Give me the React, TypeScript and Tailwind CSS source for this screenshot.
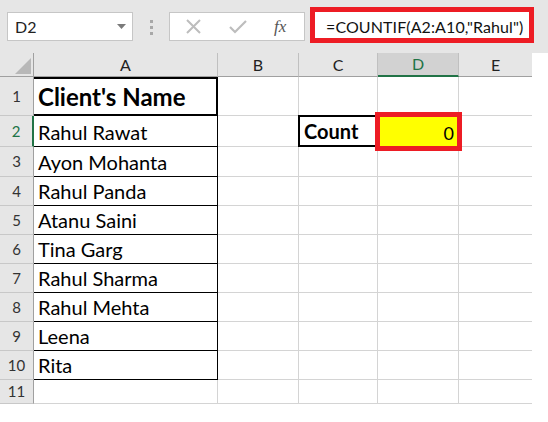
import React from "react";

const font = { fontFamily: "Lato, 'Open Sans', sans-serif" };

const names = [
  "Rahul Rawat",
  "Ayon Mohanta",
  "Rahul Panda",
  "Atanu Saini",
  "Tina Garg",
  "Rahul Sharma",
  "Rahul Mehta",
  "Leena",
  "Rita",
];

const rowHeights = [39, 31, 30, 29, 29, 29, 29, 29, 29, 29, 24];

function RowHeader({ n, h, active }: { n: number; h: number; active?: boolean }) {
  return (
    <div
      className={`flex items-center justify-center bg-[#e6e6e6] border-b border-[#c8c8c8] text-[15px] ${
        active ? "text-[#217346] border-r-2 border-r-[#217346]" : "text-[#333] border-r border-r-[#a0a0a0]"
      }`}
      style={{ height: h }}
    >
      {n}
    </div>
  );
}

export default function App() {
  return (
    <div className="w-[548px] h-[422px] bg-white overflow-hidden relative" style={font}>
      {/* toolbar */}
      <div className="h-[53px] bg-[#e6e6e6] relative flex items-start">
        <div className="mt-[12px] ml-[7px] w-[126px] h-[29px] bg-white border border-[#c6c6c6] flex items-center pl-[7px] pr-[6px] justify-between">
          <span className="text-[16px] text-[#222]">D2</span>
          <svg width="9" height="5" viewBox="0 0 9 5">
            <polygon points="0,0 9,0 4.5,5" fill="#7a7a7a" />
          </svg>
        </div>
        <div className="mt-[20px] ml-[17px] flex flex-col gap-[3px]">
          <div className="w-[3px] h-[3px] bg-[#a8a8a8]" />
          <div className="w-[3px] h-[3px] bg-[#a8a8a8]" />
          <div className="w-[3px] h-[3px] bg-[#a8a8a8]" />
        </div>
        <div className="mt-[12px] ml-[16px] w-[136px] h-[29px] bg-white border border-[#c6c6c6] flex items-center">
          <svg className="ml-[16px]" width="15" height="15" viewBox="0 0 15 15">
            <path d="M1 1 L14 14 M14 1 L1 14" stroke="#bdbdbd" strokeWidth="2" fill="none" />
          </svg>
          <svg className="ml-[28px]" width="18" height="14" viewBox="0 0 18 14">
            <path d="M1 7 L6 12 L17 1" stroke="#bdbdbd" strokeWidth="2.2" fill="none" />
          </svg>
          <span
            className="ml-[27px] text-[17px] italic text-[#555]"
            style={{ fontFamily: "'Liberation Serif', serif" }}
          >
            fx
          </span>
        </div>
        <div className="absolute left-[310px] top-[7px] w-[224px] h-[36px] border-[5px] border-[#ed1c24] bg-white flex items-center pl-[11px] pt-[3px]">
          <span className="text-[16px] text-[#111] tracking-[0.1px]">=COUNTIF(A2:A10,"Rahul")</span>
        </div>
      </div>

      {/* sheet */}
      <div className="flex">
        {/* row header column */}
        <div className="w-[34px] flex flex-col">
          <div className="h-[24px] bg-[#e6e6e6] border-r border-b border-[#a0a0a0] relative">
            <svg className="absolute left-[15px] top-[5px]" width="16" height="16" viewBox="0 0 16 16">
              <polygon points="16,0 16,16 0,16" fill="#b8b8b8" />
            </svg>
          </div>
          {rowHeights.map((h, i) => (
            <RowHeader key={i} n={i + 1} h={h} active={i === 1} />
          ))}
        </div>

        {/* column A */}
        <div className="w-[184px] flex flex-col">
          <div className="h-[24px] bg-[#e6e6e6] border-r border-[#c0c0c0] border-b border-b-[#a0a0a0] flex items-center justify-center text-[16px] text-[#222]">
            A
          </div>
          <div
            className="border-2 border-black border-l-0 flex items-center pl-[4px] font-bold text-[24px] text-black"
            style={{ height: 39 }}
          >
            Client's Name
          </div>
          {names.map((n, i) => (
            <div
              key={n}
              className="border-r border-b border-black flex items-end pb-[2px] pl-[4px] text-[20px] leading-[24px] text-black"
              style={{ height: rowHeights[i + 1] }}
            >
              {n}
            </div>
          ))}
          <div className="border-r border-b border-[#d4d4d4]" style={{ height: 24 }} />
        </div>

        {/* column B */}
        <div className="w-[81px] flex flex-col">
          <div className="h-[24px] bg-[#e6e6e6] border-r border-[#c0c0c0] border-b border-b-[#a0a0a0] flex items-center justify-center text-[16px] text-[#222]">
            B
          </div>
          {rowHeights.map((h, i) => (
            <div key={i} className="border-r border-b border-[#d4d4d4]" style={{ height: h }} />
          ))}
        </div>

        {/* column C */}
        <div className="w-[79px] flex flex-col">
          <div className="h-[24px] bg-[#e6e6e6] border-r border-[#c0c0c0] border-b border-b-[#a0a0a0] flex items-center justify-center text-[16px] text-[#222]">
            C
          </div>
          {rowHeights.map((h, i) =>
            i === 1 ? (
              <div
                key={i}
                className="border-2 border-black -ml-[1px] -mt-[1px] flex items-end pb-[2px] pl-[4px] font-bold text-[20px] leading-[24px] text-black"
                style={{ height: h + 1 }}
              >
                Count
              </div>
            ) : (
              <div key={i} className="border-r border-b border-[#d4d4d4]" style={{ height: h }} />
            )
          )}
        </div>

        {/* column D */}
        <div className="w-[81px] flex flex-col">
          <div className="h-[24px] bg-[#d2d2d2] border-r border-[#c0c0c0] border-b-2 border-b-[#217346] flex items-center justify-center text-[16px] text-[#217346]">
            D
          </div>
          {rowHeights.map((h, i) =>
            i === 1 ? (
              <div key={i} className="relative bg-[#ffff00] flex items-end justify-end pb-[2px] pr-[5px] text-[18px] leading-[24px] text-black" style={{ height: h }}>
                <div className="absolute -left-[3px] -top-[4px] -right-[3px] -bottom-[4px] border-[5px] border-[#ed1c24]" />
                <span className="relative">0</span>
              </div>
            ) : (
              <div key={i} className="border-r border-b border-[#d4d4d4]" style={{ height: h }} />
            )
          )}
        </div>

        {/* column E */}
        <div className="w-[73px] flex flex-col">
          <div className="h-[24px] bg-[#e6e6e6] border-b border-b-[#a0a0a0] flex items-center justify-center text-[16px] text-[#222]">
            E
          </div>
          {rowHeights.map((h, i) => (
            <div key={i} className="border-b border-[#d4d4d4]" style={{ height: h }} />
          ))}
        </div>
      </div>
    </div>
  );
}
